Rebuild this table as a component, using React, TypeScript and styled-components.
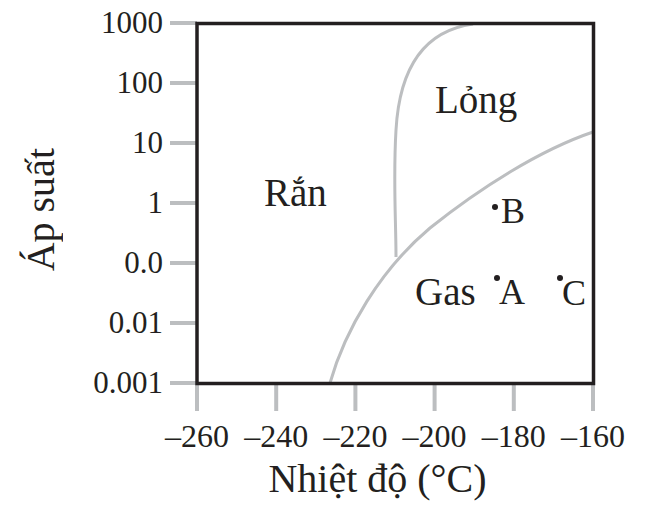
import React from 'react'
import styled, { createGlobalStyle } from 'styled-components'

const INK = '#231f20'
const GRID = '#bcbec0'

const GlobalStyle = createGlobalStyle`
    html, body {
        margin: 0;
        padding: 0;
        background: #ffffff;
    }
    body {
        font-family: "Liberation Serif", "Times New Roman", serif;
        color: ${INK};
    }
`

const Figure = styled.div`
    display: grid;
    grid-template-columns: 80px 571px;
    width: 651px;
    height: 511px;
    overflow: hidden;
`

const YTitleCell = styled.div`
    display: flex;
    align-items: center;
    justify-content: flex-start;
    height: 420px;
    padding-left: 21px;
`

const YTitle = styled.div`
    writing-mode: vertical-rl;
    transform: rotate(180deg);
    font-size: 40px;
    line-height: 40px;
    white-space: nowrap;
`

const PlotColumn = styled.div`
    display: flex;
    flex-direction: column;
`

const Chart = styled.svg`
    display: block;
    width: 571px;
    height: 458px;
    font-family: "Liberation Serif", "Times New Roman", serif;
`

const XTitle = styled.div`
    margin-top: 1px;
    padding-left: 24px;
    text-align: center;
    font-size: 40px;
    line-height: 40px;
    white-space: nowrap;
`

const TickLabel = styled.text`
    font-size: 31px;
    fill: ${INK};
`

const RegionLabel = styled.text`
    font-size: 39px;
    fill: ${INK};
`

const pressures = ['1000', '100', '10', '1', '0.0', '0.01', '0.001']
const temps = ['\u2013260', '\u2013240', '\u2013220', '\u2013200', '\u2013180', '\u2013160']

const LEFT = 197
const RIGHT = 593
const TOP = 23
const BOTTOM = 383

const points = [
    { id: 'B', cx: 495, cy: 207, x: 501, y: 223 },
    { id: 'A', cx: 497, cy: 278, x: 499, y: 304 },
    { id: 'C', cx: 560, cy: 278, x: 562, y: 305 },
]

const PhaseDiagram = () => {
    const rowGap = (BOTTOM - TOP) / (pressures.length - 1)
    const colGap = (RIGHT - LEFT) / (temps.length - 1)
    return (
        <Chart viewBox="80 0 571 458">
            {/* ticks */}
            {pressures.map((p, i) => {
                const y = TOP + i * rowGap
                return (
                    <g key={p}>
                        <line x1={170} x2={LEFT} y1={y} y2={y} stroke={GRID} strokeWidth={4} />
                        <TickLabel x={163} y={y + 10} textAnchor="end">{p}</TickLabel>
                    </g>
                )
            })}
            {temps.map((t, i) => {
                const x = LEFT + i * colGap
                return (
                    <g key={t}>
                        <line x1={x} x2={x} y1={BOTTOM} y2={411} stroke={GRID} strokeWidth={4} />
                        <TickLabel x={x} y={447} textAnchor="middle" style={{ fontSize: 32 }}>{t}</TickLabel>
                    </g>
                )
            })}

            {/* phase boundaries */}
            <path
                d="M473 24 C430 30, 400 60, 396 130 C393 180, 396 220, 396 257"
                fill="none"
                stroke={GRID}
                strokeWidth={3}
            />
            <path
                d="M330 383 C345 330, 380 270, 430 228 C480 188, 540 150, 593 132"
                fill="none"
                stroke={GRID}
                strokeWidth={3}
            />

            <rect
                x={LEFT}
                y={TOP + 0.5}
                width={RIGHT - LEFT + 0.5}
                height={BOTTOM - TOP}
                fill="none"
                stroke={INK}
                strokeWidth={3.5}
            />

            <RegionLabel x={435} y={113}>Lỏng</RegionLabel>
            <RegionLabel x={264} y={206}>Rắn</RegionLabel>
            <RegionLabel x={415} y={305}>Gas</RegionLabel>

            {points.map(pt => (
                <g key={pt.id}>
                    <circle cx={pt.cx} cy={pt.cy} r={3} fill={INK} />
                    <RegionLabel x={pt.x} y={pt.y} style={{ fontSize: 36 }}>{pt.id}</RegionLabel>
                </g>
            ))}
        </Chart>
    )
}

const App = () => {
    return (
        <>
            <GlobalStyle />
            <Figure>
                <YTitleCell>
                    <YTitle>Áp suất</YTitle>
                </YTitleCell>
                <PlotColumn>
                    <PhaseDiagram />
                    <XTitle>Nhiệt độ (°C)</XTitle>
                </PlotColumn>
            </Figure>
        </>
    )
}

export default App
